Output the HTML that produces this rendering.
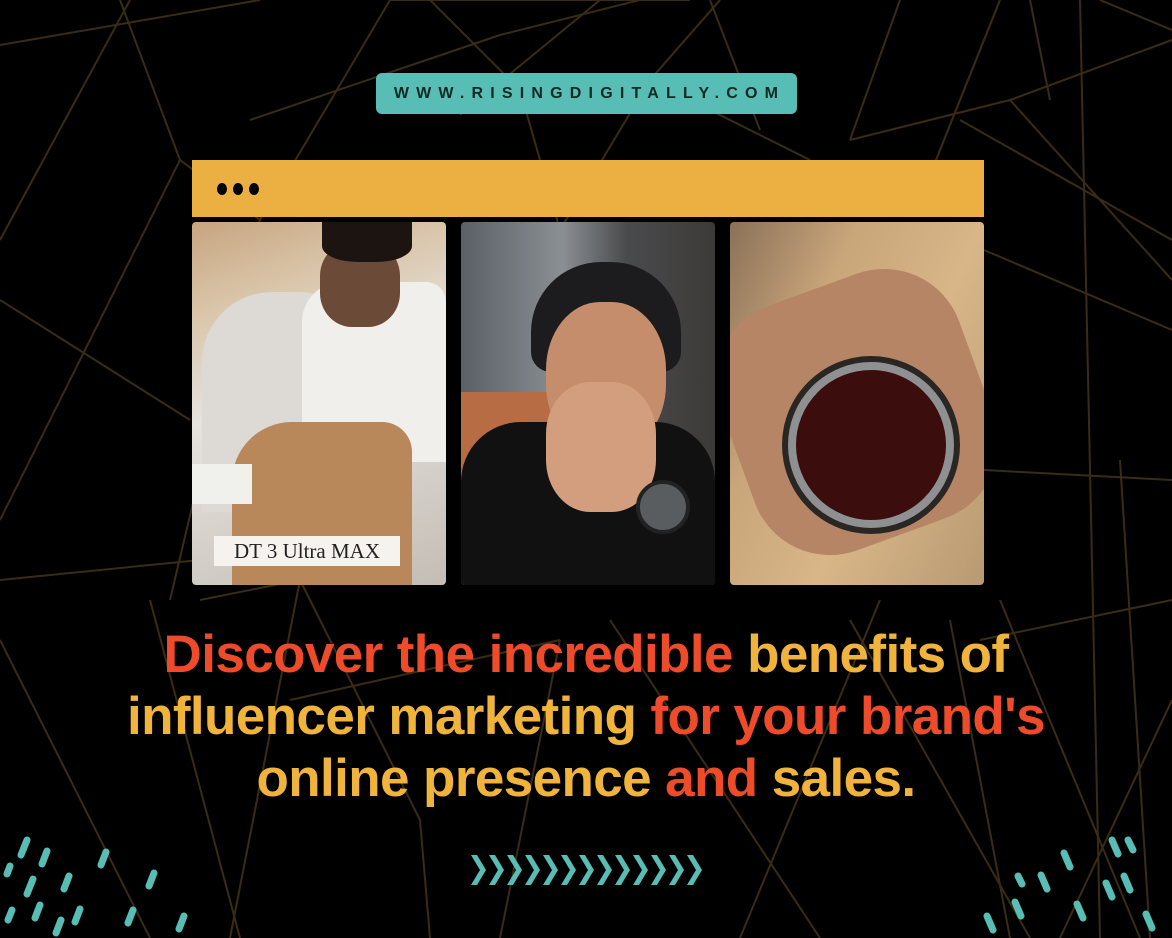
<!DOCTYPE html>
<html><head><meta charset="utf-8"><style>
body{margin:0;width:1172px;height:938px;background:#000;overflow:hidden;position:relative;font-family:"Liberation Sans",sans-serif}
.abs{position:absolute}
.badge{left:376px;top:73px;width:421px;height:41px;background:#58bdb4;border-radius:6px;color:#0d2a27;font-weight:bold;font-size:16px;letter-spacing:7.2px;text-align:center;line-height:41px;text-indent:6px;white-space:nowrap}
.bar{left:192px;top:160px;width:792px;height:57px;background:#ecb042}
.dot{width:10px;height:12px;border-radius:50%;background:#000;top:183px}
.ph{top:222px;width:254px;height:363px;border-radius:4px;overflow:hidden}
h1{position:absolute;left:0;width:1172px;top:624px;margin:0;text-align:center;font-size:53px;line-height:62px;font-weight:bold;letter-spacing:-0.6px;white-space:nowrap}
.r{color:#ee4b2b}.y{color:#f0b43c}
</style></head><body>
<svg class="abs" style="left:0;top:0" width="1172" height="938" stroke="#3a2c14" stroke-width="2" fill="none">
<path d="M0 45 L260 0 M0 240 L130 0 M120 0 L180 160 L0 520 M180 160 L260 220 L170 600 M260 220 L390 0 M390 0 L690 0 M250 120 L500 35 L640 0 M430 0 L520 90 L560 230 M460 115 L600 0 M560 230 L650 80 L720 0 M650 80 L810 160 M710 0 L760 130 M900 0 L850 140 M1000 0 L920 200 M1100 0 L1172 30 M850 140 L1010 100 L1172 40 M1010 100 L1172 280 M1030 0 L1050 100 M960 120 L1172 240 M0 300 L190 420 M0 580 L200 560 M984 470 L1172 480 M984 250 L1172 330 M1080 0 L1100 938 M1120 460 L1150 938 M0 640 L150 938 M150 600 L240 938 M200 600 L300 580 L230 938 M300 580 L420 820 L430 938 M290 700 L560 640 M560 640 L500 938 M610 620 L820 938 M880 600 L740 938 M850 620 L1030 938 M950 620 L1010 938 M980 640 L1172 600 M1172 700 L1060 938 M1000 600 L1140 938"/>
</svg>
<div class="abs badge">WWW.RISINGDIGITALLY.COM</div>
<div class="abs bar"></div>
<div class="abs dot" style="left:217px"></div><div class="abs dot" style="left:233px"></div><div class="abs dot" style="left:249px"></div>
<div class="abs ph" style="left:192px;background:linear-gradient(160deg,#c7a57f 0%,#d9c4a8 20%,#e6e3df 45%,#c4bdb5 100%)">
 <div class="abs" style="left:10px;top:70px;width:140px;height:220px;background:#ddd9d4;border-radius:70px 40px 0 0"></div>
 <div class="abs" style="left:110px;top:60px;width:144px;height:180px;background:#f1efec;border-radius:40px 20px 0 0"></div>
 <div class="abs" style="left:128px;top:20px;width:80px;height:85px;background:#6b4a38;border-radius:40%"></div>
 <div class="abs" style="left:130px;top:0;width:90px;height:40px;background:#1b1411;border-radius:0 0 40% 40%"></div>
 <div class="abs" style="left:40px;top:200px;width:180px;height:163px;background:#b8875a;border-radius:60px 30px 0 0"></div>
 <div class="abs" style="left:0;top:242px;width:60px;height:40px;background:#f0f0ec"></div>
 <div class="abs" style="left:22px;top:314px;width:186px;height:30px;background:#f6f3ee;color:#222;font-family:'Liberation Serif',serif;font-size:21px;line-height:30px;text-align:center;white-space:nowrap">DT 3 Ultra MAX</div>
</div>
<div class="abs ph" style="left:461px;background:linear-gradient(90deg,#5b6066 0%,#8a8f94 40%,#4a4b4d 65%,#3c3a38 100%)">
 <div class="abs" style="left:0;top:170px;width:110px;height:200px;background:#b86c44"></div>
 <div class="abs" style="left:70px;top:40px;width:150px;height:110px;background:#1c1c1e;border-radius:70px 70px 20px 20px"></div>
 <div class="abs" style="left:85px;top:80px;width:120px;height:150px;background:#c58d6c;border-radius:45%"></div>
 <div class="abs" style="left:0;top:200px;width:254px;height:163px;background:#111;border-radius:60px 60px 0 0"></div>
 <div class="abs" style="left:85px;top:160px;width:110px;height:130px;background:#d29e7e;border-radius:40%"></div>
 <div class="abs" style="left:175px;top:258px;width:46px;height:46px;background:#5a5d60;border-radius:50%;border:4px solid #222"></div>
</div>
<div class="abs ph" style="left:730px;background:linear-gradient(115deg,#8a7158 0%,#c9a57a 30%,#d8b688 60%,#b89a72 100%)">
 <div class="abs" style="left:0;top:60px;width:254px;height:260px;background:#b58566;transform:rotate(-20deg);border-radius:80px"></div>
 <div class="abs" style="left:58px;top:140px;width:150px;height:150px;border-radius:50%;background:#3b0e0d;border:8px solid #8e9091;box-shadow:0 0 0 6px #2a2624"></div>
</div>
<h1><span class="r">Discover the incredible</span> <span class="y">benefits of</span><br><span class="y">influencer marketing</span> <span class="r">for your brand's</span><br><span class="y">online presence</span> <span class="r">and</span> <span class="y">sales.</span></h1>
<svg class="abs" style="left:0;top:0" width="1172" height="938" fill="#58bdb4" stroke="#58bdb4" stroke-width="7" stroke-linecap="round">
<g stroke="none">
<path d="M471 855 h6 l9 15 l-9 15 h-6 l9 -15z M489 855 h6 l9 15 l-9 15 h-6 l9 -15z M507 855 h6 l9 15 l-9 15 h-6 l9 -15z M525 855 h6 l9 15 l-9 15 h-6 l9 -15z M543 855 h6 l9 15 l-9 15 h-6 l9 -15z M561 855 h6 l9 15 l-9 15 h-6 l9 -15z M579 855 h6 l9 15 l-9 15 h-6 l9 -15z M597 855 h6 l9 15 l-9 15 h-6 l9 -15z M615 855 h6 l9 15 l-9 15 h-6 l9 -15z M633 855 h6 l9 15 l-9 15 h-6 l9 -15z M651 855 h6 l9 15 l-9 15 h-6 l9 -15z M669 855 h6 l9 15 l-9 15 h-6 l9 -15z M687 855 h6 l9 15 l-9 15 h-6 l9 -15z"/>
</g>
<path d="M27 840 l-6 15 M47 851 l-5 13 M10 866 l-3 8 M33 879 l-6 15 M69 876 l-5 13 M106 852 l-5 13 M12 910 l-4 10 M40 905 l-5 13 M80 909 l-5 13 M154 873 l-5 13 M61 920 l-5 13 M133 910 l-5 13 M184 916 l-5 13"/>
<path d="M1112 840 l6 14 M1064 853 l6 14 M1124 876 l6 14 M1041 875 l6 14 M1077 904 l6 14 M1015 902 l6 14 M1106 883 l6 14 M1146 914 l6 14 M987 916 l6 14 M1018 876 l4 8 M1128 840 l5 10"/>
</svg>
</body></html>
